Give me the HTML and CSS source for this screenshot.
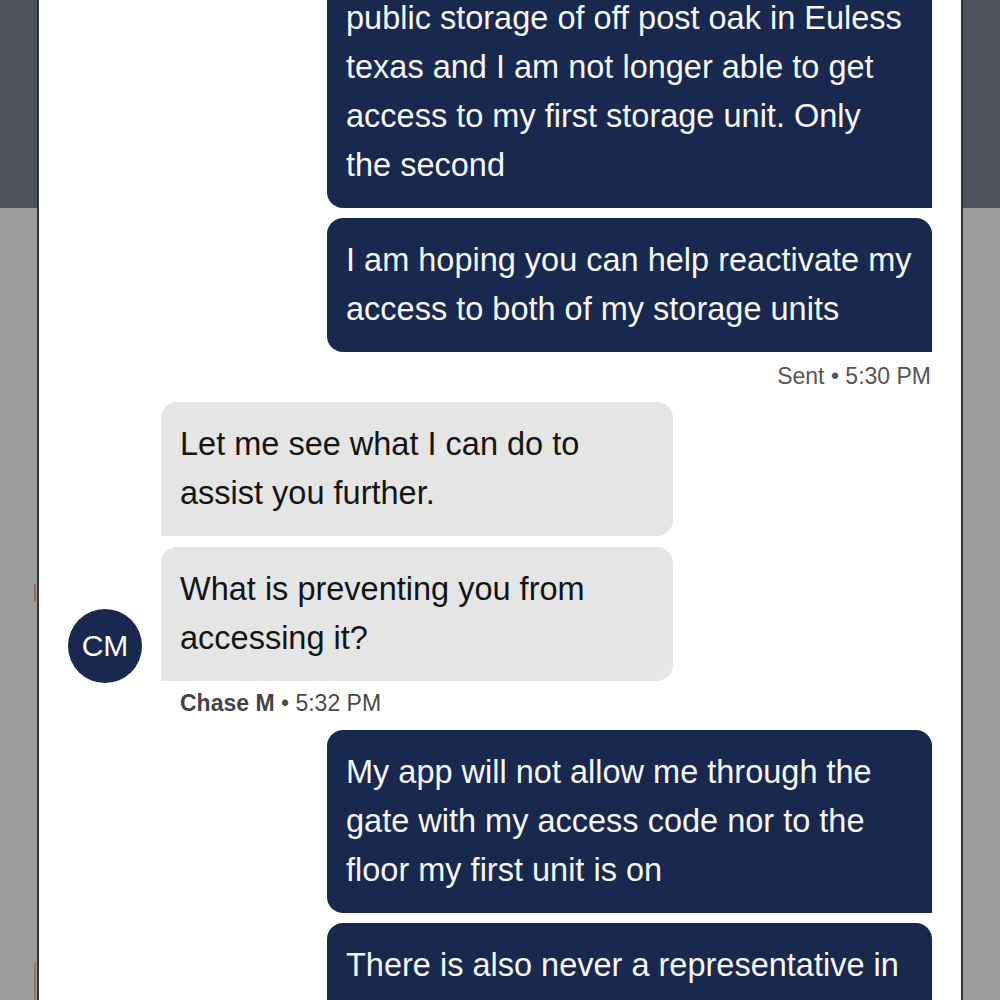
FILE: index.html
```html
<!DOCTYPE html>
<html lang="en">
<head>
<meta charset="utf-8">
<title>Chat</title>
<link rel="stylesheet" href="styles.css">
</head>
<body>
<div class="screen">
  <div class="side side-left"><span class="mark mark-a"></span><span class="mark mark-b"></span></div>
  <main class="panel">
    <div class="chat">
      <section class="group group-out">
        <div class="bubble out">public storage of off post oak in Euless texas and I am not longer able to get access to my first storage unit. Only the second</div>
        <div class="bubble out">I am hoping you can help reactivate my access to both of my storage units</div>
        <div class="meta meta-out">Sent • 5:30 PM</div>
      </section>
      <section class="group group-in">
        <div class="avatar">CM</div>
        <div class="in-col">
          <div class="bubble in">Let me see what I can do to assist you further.</div>
          <div class="bubble in">What is preventing you from accessing it?</div>
        </div>
      </section>
      <div class="meta meta-in"><b>Chase M</b> • 5:32 PM</div>
      <section class="group group-out group-last">
        <div class="bubble out">My app will not allow me through the gate with my access code nor to the floor my first unit is on</div>
        <div class="bubble out">There is also never a representative in the office when I go by</div>
      </section>
    </div>
  </main>
  <div class="side side-right"></div>
</div>
</body>
</html>
```

FILE: styles.css
```css
html, body {
  margin: 0;
  padding: 0;
}
body {
  width: 1000px;
  height: 1000px;
  overflow: hidden;
  font-family: "Liberation Sans", Arial, Helvetica, sans-serif;
  background: #fff;
}
.screen {
  display: flex;
  width: 1000px;
  height: 1000px;
}
.side {
  flex: 0 0 37px;
  background: linear-gradient(to bottom, #4b5059 0, #4b5059 208px, #9c9c9c 208px, #9c9c9c 100%);
  position: relative;
}
.mark {
  position: absolute;
  right: 1px;
  width: 2px;
  background: #9a6a4e;
  border-radius: 2px;
}
.mark-a { top: 584px; height: 18px; }
.mark-b { top: 962px; height: 38px; background: #a07058; }
.panel {
  flex: 1 1 auto;
  background: #fff;
  border-left: 2px solid #2f3441;
  border-right: 2px solid #2f3441;
  overflow: hidden;
}
.chat {
  margin-top: -24px;
  padding: 0 29px 0 28px;
  display: flex;
  flex-direction: column;
}
.group-out {
  display: flex;
  flex-direction: column;
  align-items: flex-end;
  gap: 10px;
}
.bubble {
  box-sizing: border-box;
  font-size: 32.5px;
  line-height: 49px;
  padding: 18px 18px 18px 19px;
}
.out {
  max-width: 605px;
  background: #18284f;
  color: #f7f7f7;
  border-radius: 16px 16px 0 16px;
}
.meta {
  font-size: 23px;
  line-height: 26px;
  color: #555;
}
.meta-out {
  margin-top: 1px;
  margin-right: 1px;
}
.group-in {
  margin-top: 13px;
  display: flex;
  align-items: flex-end;
  gap: 19px;
}
.avatar {
  flex: 0 0 74px;
  height: 74px;
  border-radius: 50%;
  background: #18284f;
  color: #fff;
  font-size: 30px;
  display: flex;
  align-items: center;
  justify-content: center;
  margin-bottom: -2px;
  margin-left: 1px;
}
.in-col {
  display: flex;
  flex-direction: column;
  align-items: flex-start;
  gap: 11px;
}
.in {
  width: 512px;
  background: #e5e5e5;
  color: #141414;
  border-radius: 16px 16px 16px 0;
}
.meta-in {
  margin-top: 9px;
  margin-left: 113px;
  color: #4a4a4a;
}
.meta-in b {
  color: #444;
}
.group-last {
  margin-top: 14px;
}
```
